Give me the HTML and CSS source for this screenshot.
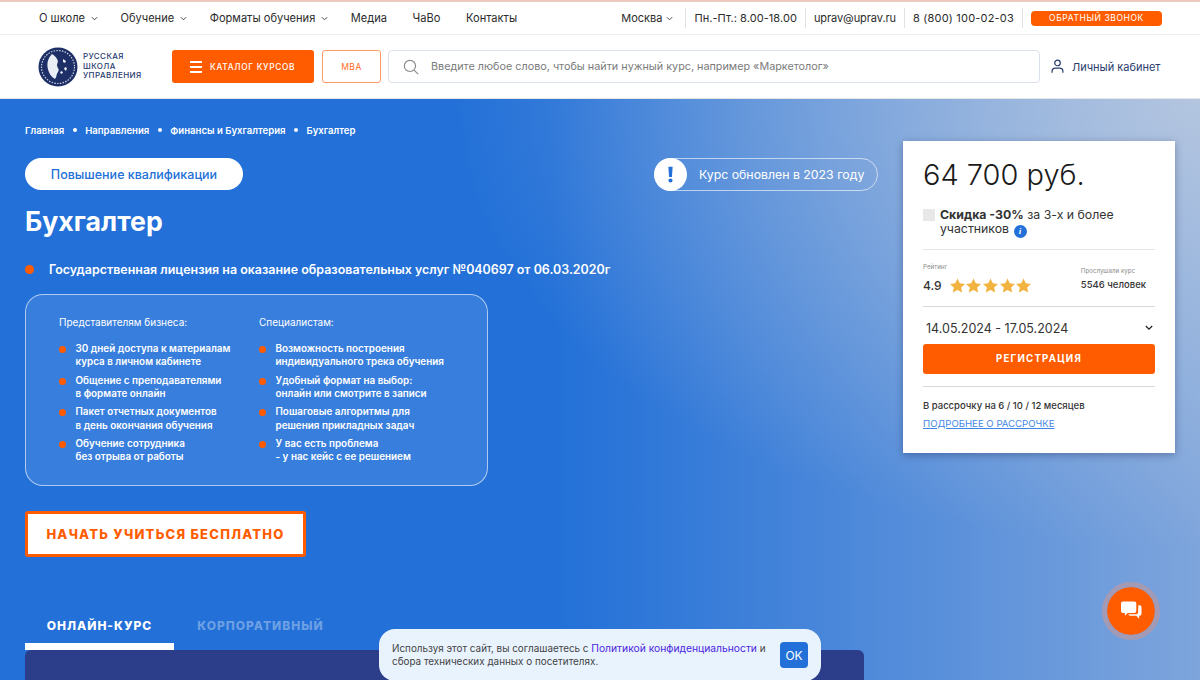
FILE: index.html
```html
<!DOCTYPE html>
<html lang="ru">
<head>
<meta charset="utf-8">
<title>Бухгалтер — Русская школа управления</title>
<link rel="stylesheet" href="styles.css">
</head>
<body>
<div class="page">
  <div class="topbar">
    <nav class="topnav">
      <a>О школе <svg class="chev" viewBox="0 0 8 5"><path d="M1 1l3 3 3-3"/></svg></a>
      <a>Обучение <svg class="chev" viewBox="0 0 8 5"><path d="M1 1l3 3 3-3"/></svg></a>
      <a>Форматы обучения <svg class="chev" viewBox="0 0 8 5"><path d="M1 1l3 3 3-3"/></svg></a>
      <a>Медиа</a>
      <a class="nav-wide">ЧаВо</a>
      <a class="nav-wide">Контакты</a>
    </nav>
    <div class="contacts">
      <span class="c-item c-city">Москва <svg class="chev" viewBox="0 0 8 5"><path d="M1 1l3 3 3-3"/></svg></span>
      <span class="c-item c-hours">Пн.-Пт.: 8.00-18.00</span>
      <span class="c-item c-mail">uprav@uprav.ru</span>
      <span class="c-item c-phone">8 (800) 100-02-03</span>
      <a class="callback">ОБРАТНЫЙ ЗВОНОК</a>
    </div>
  </div>
  <header class="header">
    <div class="logo">
      <svg class="logo-mark" viewBox="0 0 40 40">
        <circle cx="20" cy="20" r="19.500" fill="#1d2f66"/>
        <circle cx="20" cy="20" r="16.500" fill="none" stroke="#c9d0e0" stroke-width="1.200" stroke-dasharray="1.500 1.300"/>
        <path d="M14 7c-3 3-5 7-4.500 13 .8 5 3.500 10 7.500 12 2-2 1-5 3-7 2-3-1-4-1-7 0-2 2-3 0-6-1-2-3-4-5-5z" fill="#e9edf5"/>
        <path d="M25 12l3 2-1 2-2-1zM27 20l2 1-1 3-2-2zM23 24l2 1-1 2-2-1z" fill="#e9edf5"/>
      </svg>
      <span class="logo-text">РУССКАЯ<br>ШКОЛА<br>УПРАВЛЕНИЯ</span>
    </div>
    <a class="catalog"><span class="burger"><i></i><i></i><i></i></span>КАТАЛОГ КУРСОВ</a>
    <a class="mba">MBA</a>
    <div class="search">
      <svg class="search-ico" viewBox="0 0 18 18"><circle cx="7.800" cy="7.800" r="6.300"/><path d="M12.500 12.500l4.500 4.500"/></svg>
      <span>Введите любое слово, чтобы найти нужный курс, например «Маркетолог»</span>
    </div>
    <a class="account">
      <svg class="user-ico" viewBox="0 0 14 16"><circle cx="7" cy="4.200" r="3"/><path d="M1.200 14.800v-1.600c0-2 1.600-3.400 3.400-3.400h4.800c1.800 0 3.400 1.400 3.400 3.400v1.600"/></svg>
      Личный кабинет
    </a>
  </header>
  <main class="hero">
    <section class="left">
      <div class="crumbs">
        <a>Главная</a><i></i><a>Направления</a><i></i><a>Финансы и Бухгалтерия</a><i></i><a>Бухгалтер</a>
      </div>
      <div class="pill-row">
        <span class="pill">Повышение квалификации</span>
        <span class="updated"><span class="excl"><svg viewBox="0 0 8 20"><path d="M1.500 1h5l-.8 12H2.300z"/><circle cx="4" cy="17" r="2.400"/></svg></span>Курс обновлен в 2023 году</span>
      </div>
      <h1 class="title">Бухгалтер</h1>
      <p class="license">Государственная лицензия на оказание образовательных услуг №040697 от 06.03.2020г</p>
      <div class="benefits">
        <div class="bcol bcol-a">
          <h3>Представителям бизнеса:</h3>
          <ul>
            <li>30 дней доступа к материалам<br>курса в личном кабинете</li>
            <li>Общение с преподавателями<br>в формате онлайн</li>
            <li>Пакет отчетных документов<br>в день окончания обучения</li>
            <li>Обучение сотрудника<br>без отрыва от работы</li>
          </ul>
        </div>
        <div class="bcol">
          <h3>Специалистам:</h3>
          <ul>
            <li>Возможность построения<br>индивидуального трека обучения</li>
            <li>Удобный формат на выбор:<br>онлайн или смотрите в записи</li>
            <li>Пошаговые алгоритмы для<br>решения прикладных задач</li>
            <li>У вас есть проблема<br>- у нас кейс с ее решением</li>
          </ul>
        </div>
      </div>
      <a class="cta">НАЧАТЬ УЧИТЬСЯ БЕСПЛАТНО</a>
      <div class="tabs">
        <a class="tab tab-on">ОНЛАЙН-КУРС</a>
        <a class="tab tab-off">КОРПОРАТИВНЫЙ</a>
      </div>
      <div class="panel"></div>
    </section>
    <aside class="card">
      <div class="price">64 700 руб.</div>
      <div class="discount">
        <span class="check"></span>
        <span class="disc-text"><b>Скидка -30%</b> за 3-х и более участников <span class="info">i</span></span>
      </div>
      <div class="stats">
        <div class="rating">
          <div class="label">Рейтинг</div>
          <div class="rate-row">
            <span class="rate">4.9</span>
            <span class="stars">
              <svg viewBox="0 0 16 15"><path d="M8 0l2.400 5.100 5.600.7-4.100 3.800 1.100 5.400L8 12.300 3 15l1.100-5.400L0 5.800l5.600-.7z"/></svg>
              <svg viewBox="0 0 16 15"><path d="M8 0l2.400 5.100 5.600.7-4.100 3.800 1.100 5.400L8 12.300 3 15l1.100-5.400L0 5.800l5.600-.7z"/></svg>
              <svg viewBox="0 0 16 15"><path d="M8 0l2.400 5.100 5.600.7-4.100 3.800 1.100 5.400L8 12.300 3 15l1.100-5.400L0 5.800l5.600-.7z"/></svg>
              <svg viewBox="0 0 16 15"><path d="M8 0l2.400 5.100 5.600.7-4.100 3.800 1.100 5.400L8 12.300 3 15l1.100-5.400L0 5.800l5.600-.7z"/></svg>
              <svg viewBox="0 0 16 15"><path d="M8 0l2.400 5.100 5.600.7-4.100 3.800 1.100 5.400L8 12.300 3 15l1.100-5.400L0 5.800l5.600-.7z"/></svg>
            </span>
          </div>
        </div>
        <div class="listened">
          <div class="label">Прослушали курс</div>
          <div class="people">5546 человек</div>
        </div>
      </div>
      <div class="dates">
        <span>14.05.2024 - 17.05.2024</span>
        <svg class="date-chev" viewBox="0 0 10 7"><path d="M1 1l4 4 4-4"/></svg>
      </div>
      <a class="register">РЕГИСТРАЦИЯ</a>
      <div class="install">В рассрочку на 6 / 10 / 12 месяцев</div>
      <a class="install-link">ПОДРОБНЕЕ О РАССРОЧКЕ</a>
    </aside>
  </main>
  <div class="cookie">
    <p>Используя этот сайт, вы соглашаетесь с <a>Политикой конфиденциальности</a> и сбора технических данных о посетителях.</p>
    <button class="ok">OK</button>
  </div>
  <a class="chat">
    <svg viewBox="0 0 22 20"><path d="M2 0h12a2 2 0 0 1 2 2v8a2 2 0 0 1-2 2H7l-3 3v-3H2a2 2 0 0 1-2-2V2a2 2 0 0 1 2-2z"/><path d="M18 4h1.500A2 2 0 0 1 21.500 6v7a2 2 0 0 1-2 2H19v3l-3-3H9l-1.500-1.500H15a3 3 0 0 0 3-3z"/></svg>
  </a>
</div>
</body>
</html>
```

FILE: styles.css
```css
* { box-sizing: border-box; }
html, body { margin: 0; padding: 0; }
body { font-family: Inter, "Noto Sans", sans-serif; color: #222; background: #fff; }
a { text-decoration: none; color: inherit; }
.page { position: relative; width: 1200px; height: 680px; overflow: hidden; }

.topbar {
  height: 35px;
  padding: 0 38px 0 39px;
  border-top: 2px solid #ecc9c0;
  border-bottom: 1px solid #f0f0f2;
  display: flex;
  justify-content: space-between;
  align-items: center;
  font-size: 11px;
  color: #2b2b2b;
}
.topnav { display: flex; gap: 23px; font-size: 11.100px; }
.topnav a { display: flex; align-items: center; gap: 5.500px; white-space: nowrap; }
.topnav .nav-wide { margin-left: 2.500px; }
.chev { width: 7px; height: 5px; fill: none; stroke: #444; stroke-width: 1.100; }
.contacts { display: flex; align-items: center; }
.c-item {
  display: flex; align-items: center; gap: 4px;
  height: 20px;
  padding: 0 8px;
  border-right: 1px solid #dfe2e6;
  white-space: nowrap;
}
.c-city { padding-right: 12px; }
.c-hours { letter-spacing: .06px; }
.c-mail { letter-spacing: -.07px; }
.c-phone { letter-spacing: .2px; }
.callback {
  margin-left: 8px;
  width: 131px; height: 15px;
  background: #ff5c00;
  border-radius: 4px;
  color: #fff;
  font-size: 8.500px;
  letter-spacing: .6px;
  display: flex; align-items: center; justify-content: center;
}

.header {
  height: 64px;
  padding: 0 38px 0 38px;
  display: flex;
  align-items: center;
  border-bottom: 1px solid #e6e6e6;
}
.logo { display: flex; align-items: center; gap: 5px; width: 134px; }
.logo-mark { width: 40px; height: 40px; flex: none; }
.logo-text { font-size: 8px; line-height: 9.500px; letter-spacing: .4px; color: #2a3c6e; font-weight: 500; }
.catalog {
  width: 142px; height: 33px;
  background: #ff5c00;
  border-radius: 3px;
  color: #fff;
  font-size: 8.300px;
  font-weight: 500;
  letter-spacing: .7px;
  display: flex; align-items: center; padding-left: 18px; gap: 8px;
}
.burger { display: flex; flex-direction: column; gap: 3px; width: 12px; }
.burger i { display: block; height: 2px; background: #fff; }
.mba {
  margin-left: 8px;
  width: 59px; height: 33px;
  border: 1px solid #ff9c66;
  border-radius: 3px;
  color: #ff6a1a;
  font-size: 8.500px;
  letter-spacing: .5px;
  display: flex; align-items: center; justify-content: center;
}
.search {
  margin-left: 7px;
  width: 652px; height: 33px;
  border: 1px solid #dbe1ea;
  border-radius: 4px;
  display: flex; align-items: center;
  padding-left: 14px; gap: 12px;
  font-size: 10.800px;
  color: #7b7b7b;
}
.search-ico { width: 16px; height: 16px; fill: none; stroke: #8a8a8a; stroke-width: 1.300; }
.account {
  margin-left: 11px;
  display: flex; align-items: center; gap: 8px;
  font-size: 11px;
  color: #2a3c6e;
  white-space: nowrap;
}
.user-ico { width: 13px; height: 15px; fill: none; stroke: #2a3c6e; stroke-width: 1.300; }

.hero {
  height: 581px;
  padding: 0 25px;
  display: flex;
  gap: 25px;
  align-items: flex-start;
  background:
    radial-gradient(ellipse 750px 450px at 100% 0, rgba(200,210,225,.72), rgba(200,210,225,0)),
    linear-gradient(90deg, #2270d8 46%, #7ea5dc 100%);
}
.left { width: 853px; flex: none; }
.crumbs {
  height: 14px; margin-top: 24px;
  display: flex; align-items: center;
  color: #fff;
  font-size: 9.600px;
  font-weight: 600;
}
.crumbs i { width: 4px; height: 4px; border-radius: 50%; background: #fff; margin: 0 8.500px; }
.pill-row { margin-top: 21px; display: flex; justify-content: space-between; align-items: flex-start; }
.pill {
  width: 218px; height: 32px;
  background: #fff; border-radius: 16px;
  color: #2270d8;
  font-size: 12.500px; font-weight: 500;
  display: flex; align-items: center; justify-content: center;
}
.updated {
  width: 224px; height: 33px;
  border: 1px solid rgba(255,255,255,.6);
  border-radius: 17px;
  color: #fff;
  font-size: 12.300px;
  display: flex; align-items: center;
  gap: 12px;
}
.excl {
  width: 33px; height: 33px; margin: -1px 0 -1px -1px;
  background: #fff; border-radius: 50%;
  display: flex; align-items: center; justify-content: center;
}
.excl svg { width: 7px; height: 17px; fill: #2270d8; }
.title { margin: 14px 0 0; font-size: 26.700px; line-height: 32px; font-weight: 700; color: #fff; }
.license {
  margin: 25px 0 0;
  padding-left: 24px;
  position: relative;
  font-size: 12.450px; line-height: 16px;
  font-weight: 600;
  color: #fff;
}
.license::before {
  content: ""; position: absolute; left: 0; top: 3px;
  width: 9px; height: 9px; border-radius: 50%; background: #ff5c00;
}
.benefits {
  margin-top: 16px;
  width: 463px; height: 192px;
  border: 1px solid rgba(255,255,255,.6);
  border-radius: 18px;
  background: rgba(255,255,255,.1);
  padding: 20px 0 0 33px;
  display: flex;
  color: #fff;
}
.bcol-a { width: 200px; flex: none; }
.bcol h3 { margin: 0 0 13px; font-size: 10px; line-height: 14px; font-weight: 400; }
.bcol ul { list-style: none; margin: 0; padding: 0; display: flex; flex-direction: column; gap: 5.100px; }
.bcol li {
  position: relative;
  padding-left: 16.500px;
  font-size: 9.900px; line-height: 13.300px;
  font-weight: 600;
  white-space: nowrap;
}
.bcol li::before {
  content: ""; position: absolute; left: 0; top: 4px;
  width: 7px; height: 7px; border-radius: 50%; background: #ff5c00;
}
.cta {
  margin-top: 25px;
  display: flex; align-items: center; justify-content: center;
  width: 281px; height: 46px;
  background: #fff;
  border: 3px solid #ff5c00;
  border-radius: 3px;
  color: #ff5c00;
  font-size: 13px; font-weight: 800;
  letter-spacing: 1.250px;
}
.tabs { margin-top: 59px; display: flex; height: 34px; }
.tab {
  width: 149px;
  padding-top: 2px;
  text-align: center;
  font-size: 12px; font-weight: 800; letter-spacing: 1px;
  color: #6ea0e4;
}
.tab-off { width: 173px; }
.tab-on { color: #fff; border-bottom: 7px solid #fff; }
.panel { height: 60px; background: #2c3e8a; border-radius: 6px 6px 0 0; width: 839px; }

.card {
  margin-top: 42px;
  width: 272px; height: 312px;
  background: #fff;
  padding: 0 20px;
  box-shadow: 0 2px 8px rgba(0,0,50,.3);
}
.price { margin-top: 14px; font-size: 29px; line-height: 39px; color: #1a1a1a; font-weight: 300; }
.discount { margin-top: 14px; display: flex; gap: 5px; padding-bottom: 11px; border-bottom: 1px solid #e4e4e4; }
.check { width: 12px; height: 12px; background: #e8e8e8; flex: none; margin-top: 1px; }
.disc-text { font-size: 12.300px; line-height: 14px; color: #333; }
.disc-text b { font-weight: 700; }
.info {
  display: inline-flex; align-items: center; justify-content: center;
  width: 13px; height: 13px; margin-left: 1px; border-radius: 50%;
  background: #2270d8; color: #fff;
  font: italic 700 9px "Liberation Serif", serif;
  vertical-align: -1px;
}
.stats { display: flex; justify-content: space-between; height: 57px; border-bottom: 1px solid #d8d8d8; padding-right: 9px; }
.label { font-size: 6.200px; line-height: 8px; color: #8a8a8a; }
.rating .label { margin-top: 13px; }
.rate-row { display: flex; align-items: center; gap: 8px; margin-top: 7px; }
.rate { font-size: 12px; font-weight: 500; color: #333; }
.stars { display: flex; gap: 1.700px; }
.stars svg { width: 15px; height: 15px; fill: #f2b440; }
.listened .label { margin-top: 17px; }
.people { margin-top: 4px; font-size: 9.500px; font-weight: 500; color: #333; }
.dates {
  height: 37px;
  padding: 6px 2px 0 3px;
  display: flex; align-items: center; justify-content: space-between;
  font-size: 12.500px; color: #333;
}
.date-chev { width: 8px; height: 6px; fill: none; stroke: #222; stroke-width: 1.600; }
.register {
  display: flex; align-items: center; justify-content: center;
  height: 30px;
  background: #ff5c00; border-radius: 3px;
  color: #fff;
  font-size: 9.700px; font-weight: 700; letter-spacing: 1.200px;
}
.install {
  margin-top: 12px; padding-top: 12px;
  border-top: 1px solid #d8d8d8;
  font-size: 9.500px; line-height: 13px; font-weight: 500; color: #333;
}
.install-link {
  display: block; margin-top: 5px;
  font-size: 9.600px; line-height: 13px;
  color: #3f87e6;
  text-decoration: underline;
}

.cookie {
  position: absolute; left: 379px; top: 629px;
  width: 442px; height: 52px;
  background: #e9f3fe;
  border-radius: 16px;
  padding: 13px 13px 0;
  display: flex; justify-content: space-between; align-items: flex-start;
}
.cookie p { margin: 0; width: 382px; font-size: 9.900px; line-height: 13px; color: #444; }
.cookie a { color: #4b1fe0; font-size: 10.300px; line-height: 12px; }
.ok {
  margin: 0; padding: 0; border: 0;
  width: 28px; height: 26px;
  background: #2270d8; border-radius: 4px;
  color: #fff; font: 400 12px Inter, sans-serif;
}
.chat {
  position: absolute; left: 1102px; top: 582px;
  width: 58px; height: 58px;
  border-radius: 50%;
  background: #ff5c00;
  background-clip: padding-box;
  border: 5px solid #a39ab5;
  display: flex; align-items: center; justify-content: center;
}
.chat svg { width: 21px; height: 20px; fill: #fff; }
```
